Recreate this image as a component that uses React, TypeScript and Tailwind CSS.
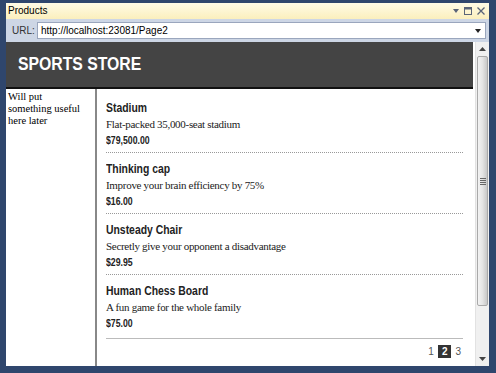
const products = [
  { name: 'Stadium', description: 'Flat-packed 35,000-seat stadium', price: '$79,500.00' },
  { name: 'Thinking cap', description: 'Improve your brain efficiency by 75%', price: '$16.00' },
  { name: 'Unsteady Chair', description: 'Secretly give your opponent a disadvantage', price: '$29.95' },
  { name: 'Human Chess Board', description: 'A fun game for the whole family', price: '$75.00' },
];

function ScrollBar() {
  return (
    <div className="w-[14px] flex flex-col bg-[#f0f0f0] border-l border-[#e2e2e2]">
      <div className="h-[14px] flex items-center justify-center">
        <svg width="7" height="4" viewBox="0 0 7 4">
          <path d="M0 4 L3.5 0 L7 4 Z" fill="#444" />
        </svg>
      </div>
      <div className="h-[250px] mx-[1px] rounded-[2px] border border-[#a9a9a9] bg-gradient-to-r from-[#f3f3f3] via-[#e4e4e4] to-[#c8c8c8] flex items-center justify-center">
        <div className="flex flex-col gap-[1px]">
          <div className="w-[6px] h-[1px] bg-[#666]" />
          <div className="w-[6px] h-[1px] bg-[#666]" />
          <div className="w-[6px] h-[1px] bg-[#666]" />
          <div className="w-[6px] h-[1px] bg-[#666]" />
        </div>
      </div>
      <div className="flex-1" />
      <div className="h-[14px] flex items-center justify-center">
        <svg width="7" height="4" viewBox="0 0 7 4">
          <path d="M0 0 L7 0 L3.5 4 Z" fill="#444" />
        </svg>
      </div>
    </div>
  );
}

export default function App() {
  return (
    <div className="w-[496px] h-[373px] bg-[#2f466d] pl-[6px] pr-[7px] pt-[3px] pb-[7px] flex flex-col">
      <div className="h-[16px] bg-gradient-to-b from-[#fffbe6] to-[#fbefbd] flex items-center justify-between pl-[2px] pr-[4px]">
        <span className="text-[10px] leading-none text-black font-['Liberation_Sans',Arial,sans-serif]">Products</span>
        <div className="flex items-center gap-[5px]">
          <svg width="6" height="4" viewBox="0 0 6 4">
            <path d="M0 0 L6 0 L3 4 Z" fill="#5a6478" />
          </svg>
          <svg width="8" height="8" viewBox="0 0 8 8">
            <rect x="0.5" y="0.5" width="7" height="7" fill="none" stroke="#5a6478" />
            <rect x="0.5" y="0.5" width="7" height="2" fill="#5a6478" />
          </svg>
          <svg width="8" height="8" viewBox="0 0 8 8">
            <path d="M0.5 0.5 L7.5 7.5 M7.5 0.5 L0.5 7.5" stroke="#5a6478" strokeWidth="1.3" />
          </svg>
        </div>
      </div>
      <div className="h-[23px] bg-[#cdd6e5] flex items-center pl-[6px] pr-[3px]">
        <span className="text-[10px] text-[#333] font-['Liberation_Sans',Arial,sans-serif] w-[25px]">URL:</span>
        <div className="flex-1 h-[17px] bg-white border border-[#9aa6bd] flex items-center justify-between pl-[3px] pr-[4px]">
          <span className="text-[10px] text-black font-['Liberation_Sans',Arial,sans-serif] leading-none">http://localhost:23081/Page2</span>
          <svg width="6" height="4" viewBox="0 0 6 4">
            <path d="M0 0 L6 0 L3 4 Z" fill="#222" />
          </svg>
        </div>
      </div>
      <div className="flex-1 flex bg-white min-h-0">
        <div className="flex-1 flex flex-col min-w-0 mr-[2px]">
          <div className="h-[47px] bg-[#444444] border-b-2 border-[#111] flex items-center pl-[12px]">
            <span className="inline-block origin-left scale-x-[0.83] text-[19px] font-bold text-white font-['Liberation_Sans',Arial,sans-serif]">
              SPORTS STORE
            </span>
          </div>
          <div className="flex-1 flex min-h-0">
            <div className="w-[91px] border-r-2 border-[#888] pl-[2px] pt-[2px]">
              <p className="w-[78px] text-[10.5px] leading-[12px] text-black font-['Liberation_Serif',serif]">
                Will put something useful here later
              </p>
            </div>
            <div className="flex-1 pl-[9px] pr-[10px] pt-[3px] flex flex-col">
              {products.map((p, i) => (
                <div
                  key={p.name}
                  className={`pt-[8px] pb-[4px] ${i < products.length - 1 ? 'border-b border-dotted border-[#999]' : ''}`}
                >
                  <div className="text-[13px] leading-[16px] font-bold text-[#222] font-['Liberation_Sans',Arial,sans-serif]">
                    <span className="inline-block origin-left scale-x-[0.8]">{p.name}</span>
                  </div>
                  <div className="text-[11px] leading-[16px] tracking-[-0.3px] text-[#222] font-['Liberation_Serif',serif]">
                    {p.description}
                  </div>
                  <div className="text-[10.5px] leading-[16px] font-bold text-[#222] font-['Liberation_Sans',Arial,sans-serif]">
                    <span className="inline-block origin-left scale-x-[0.83]">{p.price}</span>
                  </div>
                </div>
              ))}
              <div className="mt-[3px] border-t border-[#bbb] pt-[5px] flex justify-end items-center gap-[3px] pr-[1px] text-[10px] font-['Liberation_Sans',Arial,sans-serif]">
                <span className="text-[#555] px-[1px]">1</span>
                <span className="bg-[#333] text-white font-bold px-[4px] leading-[13px]">2</span>
                <span className="text-[#555] px-[1px]">3</span>
              </div>
            </div>
          </div>
        </div>
        <ScrollBar />
      </div>
    </div>
  );
}
